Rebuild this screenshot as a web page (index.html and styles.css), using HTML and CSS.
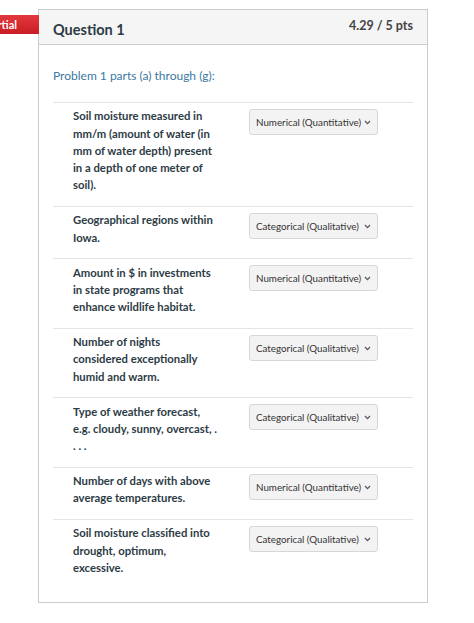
FILE: index.html
```html
<!DOCTYPE html>
<html>
<head>
<meta charset="utf-8">
<link rel="stylesheet" href="styles.css">
</head>
<body>
<div class="page">
  <div class="card">
    <div class="badge">Partial</div>
    <div class="card-header">
      <span class="q-title">Question 1</span>
      <span class="q-pts">4.29 / 5 pts</span>
    </div>
    <div class="card-body">
      <p class="intro">Problem 1 parts (a) through (g):</p>
      <div class="rows">
        <div class="row">
          <div class="label">Soil moisture measured in<br>mm/m (amount of water (in<br>mm of water depth) present<br>in a depth of one meter of<br>soil).</div>
          <div class="select"><span>Numerical (Quantitative)</span><svg class="chev" width="7" height="5" viewBox="0 0 7 5"><path d="M1 1 L3.5 3.6 L6 1" fill="none" stroke="#555" stroke-width="1.2"/></svg></div>
        </div>
        <div class="row">
          <div class="label">Geographical regions within<br>Iowa.</div>
          <div class="select"><span>Categorical (Qualitative)</span><svg class="chev" width="7" height="5" viewBox="0 0 7 5"><path d="M1 1 L3.5 3.6 L6 1" fill="none" stroke="#555" stroke-width="1.2"/></svg></div>
        </div>
        <div class="row">
          <div class="label">Amount in $ in investments<br>in state programs that<br>enhance wildlife habitat.</div>
          <div class="select"><span>Numerical (Quantitative)</span><svg class="chev" width="7" height="5" viewBox="0 0 7 5"><path d="M1 1 L3.5 3.6 L6 1" fill="none" stroke="#555" stroke-width="1.2"/></svg></div>
        </div>
        <div class="row">
          <div class="label">Number of nights<br>considered exceptionally<br>humid and warm.</div>
          <div class="select"><span>Categorical (Qualitative)</span><svg class="chev" width="7" height="5" viewBox="0 0 7 5"><path d="M1 1 L3.5 3.6 L6 1" fill="none" stroke="#555" stroke-width="1.2"/></svg></div>
        </div>
        <div class="row">
          <div class="label">Type of weather forecast,<br>e.g. cloudy, sunny, overcast, .<br>. . .</div>
          <div class="select"><span>Categorical (Qualitative)</span><svg class="chev" width="7" height="5" viewBox="0 0 7 5"><path d="M1 1 L3.5 3.6 L6 1" fill="none" stroke="#555" stroke-width="1.2"/></svg></div>
        </div>
        <div class="row">
          <div class="label">Number of days with above<br>average temperatures.</div>
          <div class="select"><span>Numerical (Quantitative)</span><svg class="chev" width="7" height="5" viewBox="0 0 7 5"><path d="M1 1 L3.5 3.6 L6 1" fill="none" stroke="#555" stroke-width="1.2"/></svg></div>
        </div>
        <div class="row">
          <div class="label">Soil moisture classified into<br>drought, optimum,<br>excessive.</div>
          <div class="select"><span>Categorical (Qualitative)</span><svg class="chev" width="7" height="5" viewBox="0 0 7 5"><path d="M1 1 L3.5 3.6 L6 1" fill="none" stroke="#555" stroke-width="1.2"/></svg></div>
        </div>
      </div>
    </div>
  </div>
</div>
</body>
</html>
```

FILE: styles.css
```css
html, body {
  margin: 0;
  padding: 0;
  background: #ffffff;
}
body {
  font-family: Lato, "Open Sans", sans-serif;
  color: #2d3b45;
  overflow: hidden;
}
.page {
  padding: 9px 0 0 38px;
}
.card {
  position: relative;
  width: 388px;
  border: 1px solid #c7cdd1;
  box-sizing: content-box;
  background: #fff;
}
.badge {
  position: absolute;
  left: -62px;
  top: 5px;
  height: 19px;
  width: 71px;
  padding-right: 31px;
  box-sizing: border-box;
  text-align: right;
  background: linear-gradient(#e2393e, #c81d24);
  color: #fff;
  font-weight: 700;
  font-size: 11px;
  line-height: 19px;
  white-space: nowrap;
  clip-path: polygon(0 0, 92% 0, 100% 50%, 92% 100%, 0 100%);
}
.card-header {
  height: 34px;
  background: #f5f5f5;
  border-bottom: 1px solid #c7cdd1;
  display: flex;
  justify-content: space-between;
  padding: 0 14px;
  position: relative;
}
.q-title {
  font-weight: 700;
  font-size: 14.5px;
  padding-top: 11px;
  color: #2d3b45;
}
.q-pts {
  font-weight: 700;
  font-size: 12.5px;
  padding-top: 8px;
  color: #444;
}
.card-body {
  padding: 0 14px 14px 14px;
}
.intro {
  margin: 0;
  padding-top: 22px;
  font-size: 12px;
  line-height: 18px;
  color: #3b78a3;
  height: 35px;
}
.row {
  display: flex;
  gap: 16px;
  border-top: 1px solid #e3e6e8;
  padding: 4.4px 0 12.35px 20px;
}
.label {
  width: 160px;
  font-weight: 700;
  font-size: 11.3px;
  line-height: 17.25px;
  white-space: nowrap;
}
.select {
  margin-top: 1.5px;
  width: 129px;
  height: 26px;
  box-sizing: border-box;
  border: 1px solid #d4d8db;
  border-radius: 3px;
  background: #f3f3f3;
  display: flex;
  align-items: center;
  padding: 0 6px 0 6px;
  font-size: 9.8px;
  color: #333;
  white-space: nowrap;
}
.chev {
  flex: none;
  margin-left: auto;
  margin-top: 1px;
}
```
